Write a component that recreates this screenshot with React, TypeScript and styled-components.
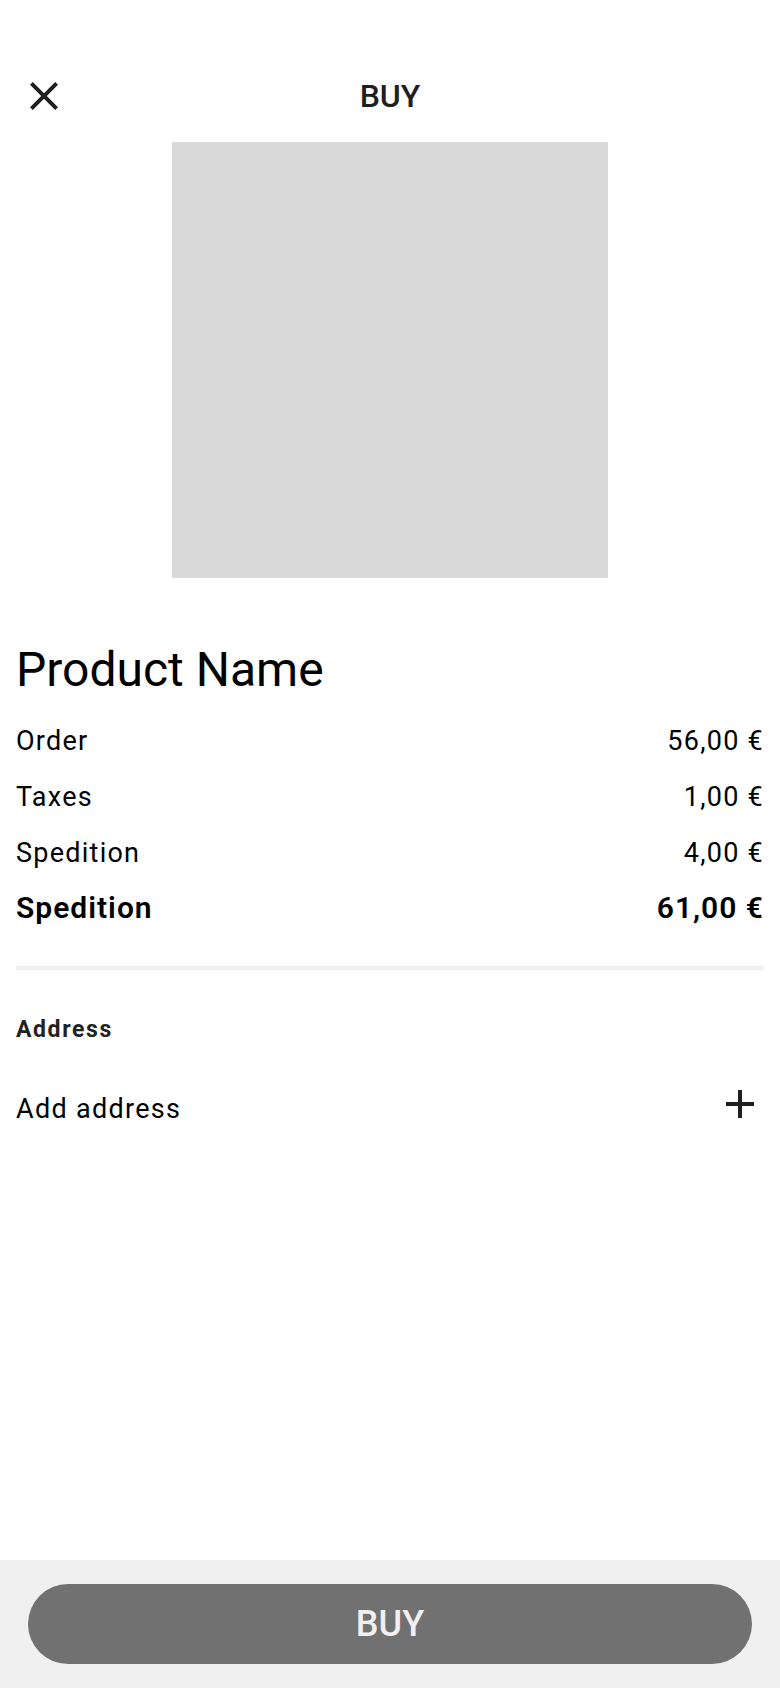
import React from "react";
import styled, { createGlobalStyle } from "styled-components";

const GlobalStyle = createGlobalStyle`
  html, body {
    margin: 0;
    padding: 0;
    background: #ffffff;
  }
  body {
    font-family: Roboto, "Noto Sans", "Liberation Sans", sans-serif;
    -webkit-font-smoothing: antialiased;
  }
  #root {
    min-height: 100vh;
    display: flex;
    flex-direction: column;
  }
`;

const Screen = styled.div`
  flex: 1;
  display: flex;
  flex-direction: column;
  min-height: 100vh;
  background: #ffffff;
`;

const Content = styled.main`
  flex: 1;
  display: flex;
  flex-direction: column;
`;

const Header = styled.header`
  display: grid;
  grid-template-columns: 48px 1fr 48px;
  align-items: center;
  height: 48px;
  margin-top: 72px;
  padding: 0 20px;
`;

const IconButton = styled.button`
  width: 48px;
  height: 48px;
  padding: 0;
  border: none;
  background: transparent;
  display: flex;
  align-items: center;
  justify-content: center;
  color: #1f1f1f;
  cursor: pointer;
`;

const Title = styled.h1`
  margin: 0;
  text-align: center;
  font-size: 32px;
  line-height: 48px;
  font-weight: 500;
  color: #1f1f1f;
`;

const ImagePlaceholder = styled.div`
  align-self: center;
  width: 436px;
  height: 436px;
  margin-top: 22px;
  background: #d9d9d9;
`;

const Section = styled.section`
  display: flex;
  flex-direction: column;
  padding: 0 16px;
`;

const ProductName = styled.h2`
  margin: 64px 0 0;
  font-size: 48px;
  line-height: 56px;
  font-weight: 400;
  color: #000000;
`;

const Rows = styled.div`
  display: flex;
  flex-direction: column;
  margin-top: 15px;
`;

const Row = styled.div<{ $total?: boolean }>`
  display: flex;
  justify-content: space-between;
  align-items: center;
  height: ${(p) => (p.$total ? "52px" : "56px")};
  font-size: ${(p) => (p.$total ? "30px" : "27px")};
  font-weight: ${(p) => (p.$total ? 600 : 400)};
  letter-spacing: ${(p) => (p.$total ? "1px" : "1.25px")};
  color: #000000;
`;

const Divider = styled.hr`
  margin: 33px 0 0;
  border: none;
  height: 4px;
  background: #efefef;
`;

const Label = styled.h3`
  margin: 44px 0 0;
  font-size: 23px;
  line-height: 32px;
  font-weight: 700;
  letter-spacing: 1.6px;
  color: #222222;
`;

const AddRow = styled.div`
  display: flex;
  justify-content: space-between;
  align-items: center;
  height: 48px;
  margin-top: 34px;
`;

const AddText = styled.span`
  font-size: 27px;
  line-height: 48px;
  padding-top: 9px;
  letter-spacing: 1.3px;
  color: #000000;
`;

const Footer = styled.footer`
  background: #f0f0f0;
  padding: 24px 28px;
`;

const BuyButton = styled.button`
  width: 100%;
  height: 80px;
  border: none;
  border-radius: 40px;
  background: #717171;
  color: #f0f0f0;
  font-family: Roboto, "Noto Sans", "Liberation Sans", sans-serif;
  font-size: 36px;
  font-weight: 500;
  display: flex;
  align-items: center;
  justify-content: center;
  cursor: pointer;
`;

const CloseIcon = () => (
  <svg width="48" height="48" viewBox="0 0 24 24" fill="currentColor" aria-hidden="true">
    <path d="M19 6.41L17.59 5 12 10.59 6.41 5 5 6.41 10.59 12 5 17.59 6.41 19 12 13.41 17.59 19 19 17.59 13.41 12z" />
  </svg>
);

const AddIcon = () => (
  <svg width="48" height="48" viewBox="0 0 24 24" fill="currentColor" aria-hidden="true">
    <path d="M19 13h-6v6h-2v-6H5v-2h6V5h2v6h6v2z" />
  </svg>
);

const lines = [
  { label: "Order", value: "56,00 €" },
  { label: "Taxes", value: "1,00 €" },
  { label: "Spedition", value: "4,00 €" },
];

export default function App() {
  return (
    <>
      <GlobalStyle />
      <Screen>
        <Content>
          <Header>
            <IconButton aria-label="Close">
              <CloseIcon />
            </IconButton>
            <Title>BUY</Title>
            <span />
          </Header>
          <ImagePlaceholder />
          <Section>
            <ProductName>Product Name</ProductName>
            <Rows>
              {lines.map((l) => (
                <Row key={l.label}>
                  <span>{l.label}</span>
                  <span>{l.value}</span>
                </Row>
              ))}
              <Row $total>
                <span>Spedition</span>
                <span>61,00 €</span>
              </Row>
            </Rows>
            <Divider />
            <Label>Address</Label>
            <AddRow>
              <AddText>Add address</AddText>
              <IconButton aria-label="Add address">
                <AddIcon />
              </IconButton>
            </AddRow>
          </Section>
        </Content>
        <Footer>
          <BuyButton>BUY</BuyButton>
        </Footer>
      </Screen>
    </>
  );
}
